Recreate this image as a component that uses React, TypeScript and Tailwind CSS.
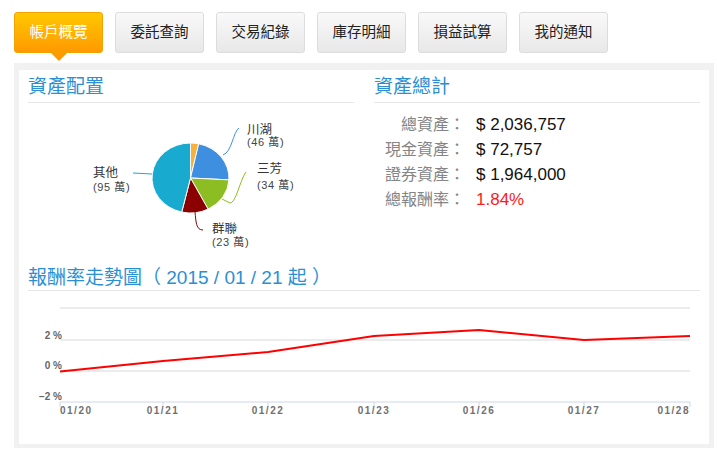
import React from 'react';

const tabs = ['帳戶概覽', '委託查詢', '交易紀錄', '庫存明細', '損益試算', '我的通知'];

const slices = [
  { name: '', value: 7, color: '#f7b13f' },
  { name: '川湖', value: 46, color: '#3f8fe0' },
  { name: '三芳', value: 34, color: '#8cbd22' },
  { name: '群聯', value: 23, color: '#8b0000' },
  { name: '其他', value: 95, color: '#18aacf' },
];

const summary = [
  { label: '總資產：', value: '$ 2,036,757' },
  { label: '現金資產：', value: '$ 72,757' },
  { label: '證券資產：', value: '$ 1,964,000' },
  { label: '總報酬率：', value: '1.84%', red: true },
];

const ticks = [
  { label: '01/20', x: 41, anchor: 'start' },
  { label: '01/21', x: 144, anchor: 'middle' },
  { label: '01/22', x: 249, anchor: 'middle' },
  { label: '01/23', x: 355, anchor: 'middle' },
  { label: '01/26', x: 460, anchor: 'middle' },
  { label: '01/27', x: 565, anchor: 'middle' },
  { label: '01/28', x: 671, anchor: 'end' },
];

const points = '41,80.5 144,70 249,61 355,45 460,39 565,49 671,45';

function Pie() {
  const cx = 162.5;
  const cy = 75;
  const rx = 38.5;
  const ry = 35;
  const total = slices.reduce((s, d) => s + d.value, 0);
  let start = 0;
  const pt = (a: number) => {
    const rad = (a * Math.PI) / 180;
    return [cx + rx * Math.sin(rad), cy - ry * Math.cos(rad)];
  };
  return (
    <svg width="326" height="163" className="block">
      {slices.map((d, i) => {
        const sweep = (d.value / total) * 360;
        const [x1, y1] = pt(start);
        const [x2, y2] = pt(start + sweep);
        const large = sweep > 180 ? 1 : 0;
        start += sweep;
        return (
          <path
            key={i}
            d={`M${cx} ${cy} L${x1} ${y1} A${rx} ${ry} 0 ${large} 1 ${x2} ${y2} Z`}
            fill={d.color}
            stroke="#fff"
            strokeWidth="1"
          />
        );
      })}
      {/* connectors */}
      <path d="M195 52 C204 49, 205 29, 211 25" fill="none" stroke="#3f8fe0" strokeWidth="1" />
      <path d="M194 96 L202 100 C208 100, 212 77, 218 69" fill="none" stroke="#8cbd22" strokeWidth="1" />
      <path d="M167 109 C168 119, 168 127, 175 127" fill="none" stroke="#8b0000" strokeWidth="1" />
      <path d="M105 70 L124 71" fill="none" stroke="#18aacf" strokeWidth="1" />
      <g fill="#333" dominantBaseline="central">
        <text x="219" y="27" fontSize="12.5">川湖</text>
        <text x="219" y="39" fontSize="11" letterSpacing="0.6" fill="#444">(46 萬)</text>
        <text x="229" y="66" fontSize="12.5">三芳</text>
        <text x="229" y="82" fontSize="11" letterSpacing="0.6" fill="#444">(34 萬)</text>
        <text x="184" y="126" fontSize="12.5">群聯</text>
        <text x="184" y="139" fontSize="11" letterSpacing="0.6" fill="#444">(23 萬)</text>
        <text x="65" y="70" fontSize="12.5">其他</text>
        <text x="65" y="84" fontSize="11" letterSpacing="0.6" fill="#444">(95 萬)</text>
      </g>
    </svg>
  );
}

function Trend() {
  return (
    <svg width="690" height="130" className="block">
      {[17, 49, 80].map((y) => (
        <line key={y} x1="41" x2="671" y1={y} y2={y} stroke="#d8d8d8" strokeWidth="1" />
      ))}
      <line x1="41" x2="671" y1="111" y2="111" stroke="#ccd6eb" strokeWidth="1" />
      {ticks.map((t) => (
        <line key={t.label} x1={t.x} x2={t.x} y1="111" y2="116" stroke="#ccd6eb" strokeWidth="1" />
      ))}
      <g fontSize="10" fontWeight="bold" fill="#666" textAnchor="end">
        <text x="43" y="48">2 %</text>
        <text x="43" y="78">0 %</text>
        <text x="43" y="109">−2 %</text>
      </g>
      <g fontSize="10" fontWeight="bold" fill="#707070" letterSpacing="1.5">
        {ticks.map((t) => (
          <text key={t.label} x={t.x} y="123" textAnchor={t.anchor as 'start' | 'middle' | 'end'}>
            {t.label}
          </text>
        ))}
      </g>
      <polyline points={points} fill="none" stroke="#ff0000" strokeWidth="2" strokeLinejoin="round" />
    </svg>
  );
}

export default function App() {
  return (
    <div className="h-[452px] w-[717px] overflow-hidden bg-white font-['Liberation_Sans','Noto_Sans_CJK_TC',sans-serif]">
      {/* Tabs */}
      <div className="flex gap-[12px] pl-[14px] pt-[12px]">
        {tabs.map((t, i) =>
          i === 0 ? (
            <div
              key={t}
              className="relative flex h-[41px] w-[89px] items-center justify-center rounded-[3px] border border-[#f2a300] bg-linear-to-b from-[#ffc800] to-[#ff9900] text-[14.5px] text-white"
            >
              {t}
              <span className="absolute left-[36px] top-[40px] h-0 w-0 border-x-[8px] border-t-[8px] border-x-transparent border-t-[#ff9900]" />
            </div>
          ) : (
            <div
              key={t}
              className="flex h-[41px] w-[89px] items-center justify-center rounded-[3px] border border-[#dcdcdc] bg-linear-to-b from-[#f9f9f9] to-[#e8e8e8] text-[14.5px] text-[#222]"
            >
              {t}
            </div>
          )
        )}
      </div>

      {/* Panel */}
      <div className="ml-[14px] mt-[10px] w-[700px] bg-[#f1f1f1] px-[5px] pb-[4px] pt-[7px]">
        <div className="h-[374px] w-[690px] bg-white">
          <div className="flex gap-[20px] px-[9px]">
            {/* 資產配置 */}
            <div className="w-[326px]">
              <div className="border-b border-[#e6e6e6] pb-[3px] pt-[5px] text-[19px] leading-[24px] text-[#2b8fd4]">資產配置</div>
              <Pie />
            </div>
            {/* 資產總計 */}
            <div className="w-[326px]">
              <div className="border-b border-[#e6e6e6] pb-[3px] pt-[5px] text-[19px] leading-[24px] text-[#2b8fd4]">資產總計</div>
              <div className="mt-[9px] flex flex-col">
                {summary.map((r) => (
                  <div key={r.label} className="flex h-[25px] items-center">
                    <span className="w-[91px] text-right text-[16px] text-[#858585]">{r.label}</span>
                    <span className={`ml-[11px] text-[17px] ${r.red ? 'text-[#ff1a1a]' : 'text-[#111]'}`}>{r.value}</span>
                  </div>
                ))}
              </div>
            </div>
          </div>
          {/* 報酬率走勢圖 */}
          <div className="px-[9px]">
            <div className="border-b border-[#e6e6e6] text-[19px] leading-[24px] text-[#2b8fd4]">報酬率走勢圖（ 2015 / 01 / 21 起 ）</div>
          </div>
          <Trend />
        </div>
      </div>
    </div>
  );
}
